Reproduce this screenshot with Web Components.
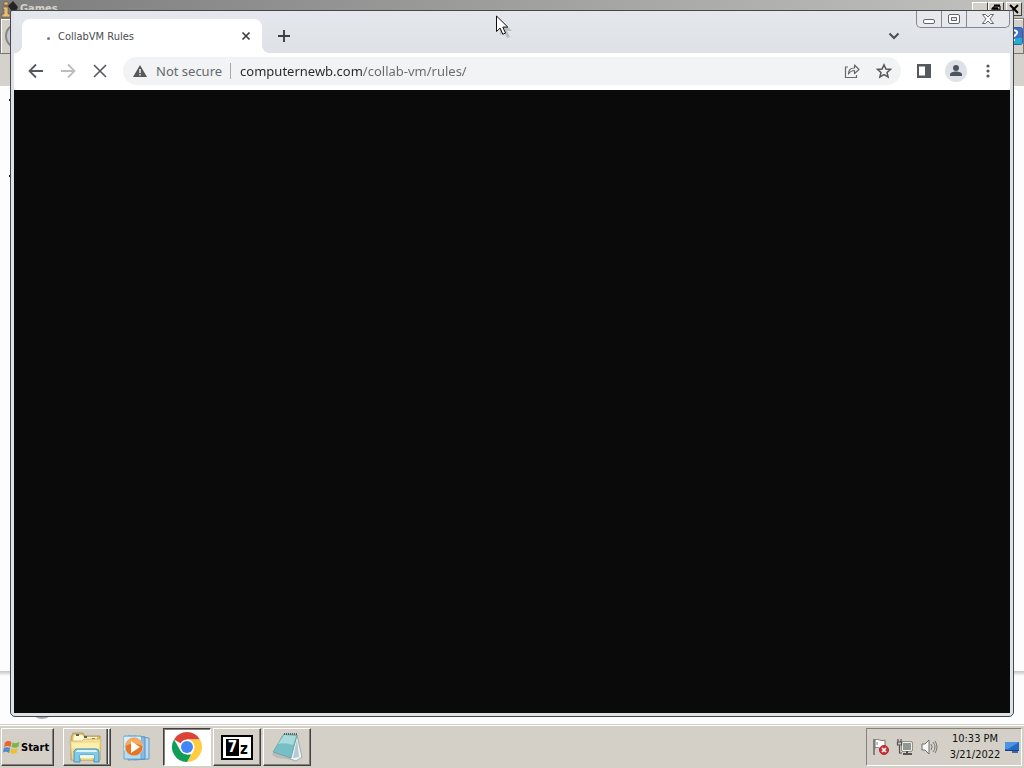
<!DOCTYPE html>
<html lang="en">
<head>
<meta charset="utf-8">
<title>Desktop</title>
<style>
  html, body {
    height: 100%;
    margin: 0;
  }
  body {
    font-family: "DejaVu Sans Condensed", "DejaVu Sans", sans-serif;
    font-size: 11px;
    background: #fdfdfe;
    overflow: hidden;
  }
</style>
</head>
<body>
<desk-top>
  <classic-window slot="window" heading="Games"></classic-window>
  <browser-window slot="window">
    <browser-tab slot="tab">CollabVM Rules</browser-tab>
    <browser-toolbar slot="toolbar" url="computernewb.com/collab-vm/rules/">Not secure</browser-toolbar>
  </browser-window>
  <task-bar slot="taskbar">
    <task-button label="Windows Explorer" mode="stack"><desk-icon name="explorer"></desk-icon></task-button>
    <task-button label="Windows Media Player" mode="flat"><desk-icon name="player"></desk-icon></task-button>
    <task-button label="Google Chrome" mode="active"><desk-icon name="chrome"></desk-icon></task-button>
    <task-button label="Archive manager"><seven-zip></seven-zip></task-button>
    <task-button label="Notepad"><desk-icon name="notepad"></desk-icon></task-button>
    <system-tray slot="tray" time="10:33 PM" date="3/21/2022"></system-tray>
  </task-bar>
</desk-top>

<script>
const icons = {
  back: [20, 20, `<path d="M17 10H4M10 3.5 3.5 10l6.500 6.500" fill="none" stroke="#55585c" stroke-width="1.800"/>`],
  forward: [20, 20, `<path d="M3 10h13M10 3.500 16.500 10 10 16.500" fill="none" stroke="#bcbdbf" stroke-width="1.800"/>`],
  stop: [20, 20, `<path d="m4 4 12 12M16 4 4 16" fill="none" stroke="#55585c" stroke-width="1.600"/>`],
  warning: [14, 14, `<path d="M7 1 14 13H0z" fill="#55585c"/><path d="M7 5v4M7 10v1.600" stroke="#f1f3f4" stroke-width="1.500"/>`],
  share: [18, 18, `<path d="M5 5H2.500v10.500h11V13" fill="none" stroke="#66696d" stroke-width="1.200"/><path d="M5.500 12c0-4 2-6 6-6V3l4.500 4.500-4.500 4v-3c-3 0-4.500 1-6 3.500z" fill="none" stroke="#66696d" stroke-width="1.200" stroke-linejoin="round"/>`],
  star: [18, 18, `<path d="m9 2.800 1.900 4.200 4.600.4-3.500 3 1.100 4.500L9 12.500l-4.100 2.400L6 10.400l-3.500-3L7.100 7z" fill="none" stroke="#55585c" stroke-width="1.500"/>`],
  panel: [16, 16, `<path d="M1 1h14v14H1z" fill="#55585c"/><path d="M3 3.500h6v9H3z" fill="#fff"/>`],
  avatar: [22, 22, `<circle cx="11" cy="11" r="11" fill="#dee1e6"/><circle cx="11" cy="8" r="3" fill="#4b5360"/><path d="M5 16v-1.500c0-2 3-3 6-3s6 1 6 3V16z" fill="#4b5360"/>`],
  dots: [16, 16, `<g fill="#55585c"><circle cx="8" cy="3" r="1.600"/><circle cx="8" cy="8" r="1.600"/><circle cx="8" cy="13" r="1.600"/></g>`],
  close: [10, 10, `<path d="m1.500 1.500 7 7m0-7-7 7" stroke="#3c4043" stroke-width="1.700"/>`],
  plus: [12, 12, `<path d="M6 0v12M0 6h12" stroke="#3c4043" stroke-width="1.900"/>`],
  chevron: [12, 8, `<path d="m1.500 1.500 4.500 4.500 4.500-4.500" fill="none" stroke="#4a4d51" stroke-width="2"/>`],
  capMin: [14, 14, `<rect x="1.500" y="7.500" width="11" height="4" rx="1.500" fill="#fff" stroke="#62656b"/>`],
  capMax: [14, 14, `<rect x="1.500" y="2.500" width="11" height="9" rx="1.500" fill="#fff" stroke="#62656b"/><path d="M4.500 5.500h5v3h-5z" fill="#e4e7eb" stroke="#62656b"/>`],
  capClose: [14, 14, `<path d="M1.500 2.500h3L7 5l2.500-2.500h3L9 7l3.500 4.500h-3L7 9l-2.500 2.500h-3L5 7z" fill="#fff" stroke="#62656b"/>`],
  oldMin: [12, 10, `<path d="M2 8h6" stroke="#000" stroke-width="2"/>`],
  oldMax: [12, 10, `<path d="M4 2h6v4H4zM2 4h6v5H2z" fill="#d4d0c8" stroke="#000"/><path d="M4 1.500h6M2 4.500h6" stroke="#000" stroke-width="2"/>`],
  oldClose: [12, 10, `<path d="m2 1 8 8m0-8-8 8" stroke="#000" stroke-width="2"/>`],
  games: [18, 18, `<path d="M3 2h4v3H3zM2 7h5v7h2v3H1v-3h2V9H2z" fill="#e8bd77" stroke="#6e532c" stroke-width=".6"/><path d="m7 6 5-5 5 6-2 4 2 2H9l1-3z" fill="#242424"/>`],
  help: [18, 18, `<rect x=".5" y=".5" width="17" height="17" rx="2" fill="#3f6fc8" stroke="#315fa9"/><path d="M1 10c7 4 11 0 16 1v6H1z" fill="#23acd4"/><path d="M6 6c0-4 7-3 6 0-.5 2-3 2-3 4M9 12v2" fill="none" stroke="#fff" stroke-width="2"/>`],
  pointer: [18, 24, `<path d="m4 4 0 16 4-3 3 6 3-1-3-6h5z" fill="#777" opacity=".35"/><path d="M.5 1v15.500l3.600-3.400 2.700 6.200 2.700-1.200-2.700-6h5z" fill="#fff" stroke="#101010"/>`],
  start: [16, 16, `<path d="M1 3.500Q4 1 7.500 3L6.500 8Q3.500 6 0 8z" fill="#e8652c"/><path d="M8.500 3.500Q12 5 15.500 3l-1.300 5Q11 9.500 7.500 8z" fill="#79b64a"/><path d="M-.2 9Q3 7.500 6.200 9L5 14Q2 12-1 13.500z" fill="#4d8bc9"/><path d="M7.200 9.300Q10.500 11 14 9.200L12.500 14Q9 15.500 6 14z" fill="#edbe36"/>`],
  explorer: [34, 34, `
    <path d="m2 8 2-5h10l2 3h15v24H2z" fill="#ddc26a" stroke="#aa914b" stroke-width=".8"/>
    <path d="M5 5h8l2 2h13v5H4z" fill="#fff7d0"/>
    <path d="M7 4h3v2H7zM15 6h3v2h-3zM23 8h3v2h-3z" fill="#52616b"/>
    <path d="M1 11h12l2-2h17l-1 21H3z" fill="#f5df93" stroke="#ceb364" stroke-width=".8"/>
    <path d="M3 13h27v5H3z" fill="#fff3bd" opacity=".7"/>
    <path d="M7 19h20q3 0 3 3v10h-5v-7H11v7H5V21z" fill="#82c8e8" stroke="#4795b8"/>
    <path d="M8 20h18q2 0 2 2H7z" fill="#dcf5fd"/><path d="M11 25h14v3H11z" fill="#eef6e6"/>`],
  player: [30, 30, `
    <path d="m12 4 15 2v21l-15 1z" fill="#b8dcf1" stroke="#6299c4"/>
    <path d="m6 4 17 1v22l-17 1z" fill="#86bce3" stroke="#5590c2"/>
    <path d="M2 4h17v23H2z" fill="#b6ddf4" stroke="#68a6d1"/>
    <path d="M2 5h17v9Q9 12 2 19z" fill="#e3f4fe" opacity=".8"/>
    <circle cx="12" cy="15" r="9" fill="#e97520" stroke="#c5c8c9"/>
    <path d="M3.500 14a8.500 8.500 0 0 1 17 0Q11 9 3.500 14z" fill="#f7a95d"/>
    <path d="m9 9 9 6-9 6z" fill="#fff"/>`],
  chrome: [32, 32, `
    <path d="M16 16 3 8.500A15 15 0 0 1 29 8.500H16z" fill="#db4437"/>
    <path d="M16 8.500h13A15 15 0 0 1 16 31l6.500-11z" fill="#ffcd40"/>
    <path d="m9.500 19.700 6.500 3.800h4.200L16 31A15 15 0 0 1 3 8.500z" fill="#0f9d58"/>
    <circle cx="16" cy="16" r="7.500" fill="#fff"/><circle cx="16" cy="16" r="6" fill="#4285f4"/>`],
  notepad: [34, 34, `
    <path d="M12 5 2 25l5 3 18 2z" fill="#87949a" opacity=".35"/>
    <path d="m27 5 5 22-6 4-6-2z" fill="#eef4f5" stroke="#919fa5" stroke-width=".8"/>
    <path d="m27 9-4 19 6-1z" fill="#b4c9d1"/>
    <path d="M14 4 3 22l18 6 6-23z" fill="#76bfc5" stroke="#669ca2" stroke-width=".7"/>
    <path d="m14 5 12 1-3 9Q15 12 8 14z" fill="#c5e9e9" opacity=".65"/>
    <path d="M14 4h13" stroke="#545f63" stroke-width="2" stroke-dasharray="1 1"/>`],
  action: [18, 18, `
    <path d="M2 1v16" stroke="#666" stroke-width="1.500"/>
    <path d="M3 2c4-2 5 2 10 0v8c-5 2-6-2-10 0z" fill="#fff" stroke="#75716f"/>
    <path d="M5 4v3" stroke="#88817d"/>
    <circle cx="12" cy="12" r="4.500" fill="#cf3238" stroke="#a72b31"/>
    <path d="m10 10 4 4m0-4-4 4" stroke="#fff" stroke-width="1.600"/>`],
  network: [18, 18, `
    <path d="M6 4h10v9H6z" fill="#8e9992" stroke="#4e514e"/><path d="M6.500 4.500h9v8h-9z" fill="none" stroke="#eee"/>
    <path d="M11 13v2M7 16h9" stroke="#555" stroke-width="2"/>
    <path d="M2 1v3M5 1v3M1.500 4h4v3h-4zM3.500 7v8H6" fill="none" stroke="#505050" stroke-width="1.200"/>`],
  volume: [18, 18, `
    <path d="M2 6h3l4-4v14l-4-4H2z" fill="#f6f6f4" stroke="#6e6e6b"/>
    <path d="M11 6q2 3 0 6M13 4q4 5 0 10M15 3q4 6 0 12" fill="none" stroke="#777773"/>`],
  monitor: [16, 14, `
    <path d="M1 2h14v8H1z" fill="#2368c5"/><path d="M1 2h14L4 9H1z" fill="#4c94e2"/>
    <path d="M1 10h14v1H1z" fill="#164386"/><path d="M8 11h6v2H8z" fill="#426a9f"/>`]
};

function build(el, html) {
  el.attachShadow({ mode: "open" }).innerHTML = html;
}

class DeskIcon extends HTMLElement {
  connectedCallback() {
    if (this.shadowRoot) return;
    const [w, h, art] = icons[this.getAttribute("name")];
    build(this, `
      <style>
        :host { display: inline-flex; flex: none; }
        svg { display: block; overflow: visible; }
      </style>
      <svg width="${w}" height="${h}" viewBox="0 0 ${w} ${h}" aria-hidden="true">${art}</svg>
    `);
  }
}

class DeskTop extends HTMLElement {
  constructor() {
    super();
    build(this, `
      <style>
        :host { display: flex; flex-direction: column; height: 100vh; }
        main { position: relative; flex: 1; min-height: 0; }
        .cursor { position: absolute; left: 496px; top: 15px; z-index: 3; pointer-events: none; }
      </style>
      <main>
        <slot name="window"></slot>
        <desk-icon class="cursor" name="pointer"></desk-icon>
      </main>
      <slot name="taskbar"></slot>
    `);
  }
}

// the window that lies behind the browser, only its edges show
class ClassicWindow extends HTMLElement {
  connectedCallback() {
    if (this.shadowRoot) return;
    build(this, `
      <style>
        :host {
          position: absolute;
          inset: 0;
          display: flex;
          flex-direction: column;
          background: #fdfdfe;
        }
        header {
          display: flex;
          align-items: center;
          height: 18px;
          padding: 0 2px 0 1px;
          background: linear-gradient(90deg, #7d7d7d, #c1c1c0);
          color: #d4d0c8;
          font-weight: bold;
        }
        h2 { flex: 1; margin: 0 0 0 1px; font-size: 11px; line-height: 20px; }
        header button {
          display: flex;
          align-items: center;
          justify-content: center;
          width: 16px;
          height: 14px;
          padding: 0;
          border: 1px solid;
          border-color: #fff #404040 #404040 #fff;
          background: #d4d0c8;
        }
        header button:last-child { margin-left: 2px; }
        .bar {
          display: flex;
          align-items: center;
          justify-content: space-between;
          box-sizing: border-box;
          height: 36px;
          border: 1px solid #777;
          background: #d4d0c8;
          box-shadow: inset 1px 1px #fff;
        }
        .nav {
          width: 26px;
          height: 26px;
          margin-left: 4px;
          padding: 0;
          border: 2px solid #85878a;
          border-radius: 50%;
          background: #c5c6c7;
        }
        .menu { height: 32px; background: #d5d2cc; }
        .view { flex: 1; }
        .details {
          height: 53px;
          background: linear-gradient(#c4c3c2, #fdfdfe 5px);
        }
        .marks {
          position: absolute;
          left: 9px;
          top: 99px;
          width: 2px;
          height: 78px;
          box-sizing: border-box;
          border: solid #222;
          border-width: 2px 0;
        }
        .thumb {
          position: absolute;
          left: 33px;
          bottom: 5px;
          width: 18px;
          height: 12px;
          border-radius: 50%;
          background: #aaa;
        }
      </style>
      <header>
        <desk-icon name="games"></desk-icon>
        <h2>${this.getAttribute("heading")}</h2>
        <button aria-label="Minimize"><desk-icon name="oldMin"></desk-icon></button>
        <button aria-label="Restore"><desk-icon name="oldMax"></desk-icon></button>
        <button aria-label="Close"><desk-icon name="oldClose"></desk-icon></button>
      </header>
      <div class="bar">
        <button class="nav" aria-label="Back"></button>
        <desk-icon name="help"></desk-icon>
      </div>
      <div class="menu"></div>
      <div class="view"></div>
      <div class="details"></div>
      <div class="marks"></div>
      <div class="thumb"></div>
    `);
  }
}

class BrowserWindow extends HTMLElement {
  constructor() {
    super();
    build(this, `
      <style>
        :host {
          position: absolute;
          inset: 10px 10px 7px;
          z-index: 1;
          display: flex;
          flex-direction: column;
          box-sizing: border-box;
          padding: 0 3px 3px;
          border: 1px solid #45474b;
          border-radius: 2px 2px 5px 5px;
          background: #dee1e6;
        }
        .strip {
          display: flex;
          align-items: flex-end;
          height: 42px;
          padding-left: 8px;
          background: linear-gradient(#e4e7ec, #dee1e6);
        }
        .strip > button {
          display: grid;
          place-items: center;
          width: 28px;
          height: 34px;
          padding: 0;
          border: 0;
          background: none;
        }
        .new { margin-left: 8px; }
        .search { margin-left: auto; margin-right: 8px; }
        .caption {
          display: flex;
          align-self: flex-start;
          box-sizing: border-box;
          height: 17px;
          border: 1px solid #85888e;
          border-top: 0;
          border-radius: 0 0 5px 5px;
          background: #e6e8ec;
        }
        .caption button {
          display: grid;
          place-items: center;
          width: 25px;
          padding: 0;
          border: 0;
          border-right: 1px solid #85888e;
          background: none;
        }
        .caption button:last-child { width: 42px; border: 0; }
        .page { flex: 1; background: #0a0a0a; }
      </style>
      <div class="strip">
        <slot name="tab"></slot>
        <button class="new" aria-label="New tab"><desk-icon name="plus"></desk-icon></button>
        <button class="search" aria-label="Search tabs"><desk-icon name="chevron"></desk-icon></button>
        <div class="caption">
          <button aria-label="Minimize"><desk-icon name="capMin"></desk-icon></button>
          <button aria-label="Maximize"><desk-icon name="capMax"></desk-icon></button>
          <button aria-label="Close"><desk-icon name="capClose"></desk-icon></button>
        </div>
      </div>
      <slot name="toolbar"></slot>
      <div class="page"><slot></slot></div>
    `);
  }
}

class BrowserTab extends HTMLElement {
  constructor() {
    super();
    build(this, `
      <style>
        :host {
          position: relative;
          display: flex;
          align-items: center;
          box-sizing: border-box;
          width: 240px;
          height: 34px;
          padding: 0 9px 0 25px;
          border-radius: 8px 8px 0 0;
          background: #fff;
          color: #4a4d51;
        }
        /* curved feet of the tab */
        :host::before, :host::after {
          content: "";
          position: absolute;
          bottom: 0;
          width: 8px;
          height: 8px;
        }
        :host::before { right: 100%; background: radial-gradient(circle at 0 0, transparent 8px, #fff 8px); }
        :host::after { left: 100%; background: radial-gradient(circle at 100% 0, transparent 8px, #fff 8px); }
        i { width: 3px; height: 3px; margin: 4px 8px 0 0; border-radius: 50%; background: #777a80; }
        span { flex: 1; }
        button { display: grid; place-items: center; width: 14px; height: 14px; padding: 0; border: 0; background: none; }
      </style>
      <i></i>
      <span><slot></slot></span>
      <button aria-label="Close tab"><desk-icon name="close"></desk-icon></button>
    `);
  }
}

class BrowserToolbar extends HTMLElement {
  connectedCallback() {
    if (this.shadowRoot) return;
    build(this, `
      <style>
        :host {
          display: flex;
          align-items: center;
          gap: 4px;
          box-sizing: border-box;
          height: 37px;
          padding: 0 8px 2px;
          background: #fff;
          font: 13px "Noto Sans", sans-serif;
        }
        button { display: grid; place-items: center; width: 28px; height: 28px; padding: 0; border: 0; background: none; }
        .omnibox {
          flex: 1;
          display: flex;
          align-items: center;
          gap: 4px;
          box-sizing: border-box;
          height: 28px;
          margin: 0 5px;
          padding: 0 3px 0 10px;
          border-radius: 14px;
          background: #f1f3f4;
          color: #66696d;
        }
        label { margin-left: 5px; white-space: nowrap; }
        input {
          flex: 1;
          min-width: 0;
          height: 24px;
          padding: 0 0 0 5px;
          border: 0;
          outline: 0;
          font: inherit;
          /* host name dark, path lighter */
          background: linear-gradient(90deg, #25282c 127px, #66696d 127px);
          -webkit-background-clip: text;
          background-clip: text;
          -webkit-text-fill-color: transparent;
        }
        .rule { width: 1px; height: 16px; margin-left: 4px; background: #a5a8ac; }
      </style>
      <button aria-label="Back"><desk-icon name="back"></desk-icon></button>
      <button aria-label="Forward"><desk-icon name="forward"></desk-icon></button>
      <button aria-label="Stop"><desk-icon name="stop"></desk-icon></button>
      <div class="omnibox">
        <desk-icon name="warning"></desk-icon>
        <label for="url"><slot></slot></label>
        <span class="rule"></span>
        <input id="url" type="text" spellcheck="false" value="${this.getAttribute("url")}">
        <button aria-label="Share"><desk-icon name="share"></desk-icon></button>
        <button aria-label="Bookmark"><desk-icon name="star"></desk-icon></button>
      </div>
      <button aria-label="Side panel"><desk-icon name="panel"></desk-icon></button>
      <button aria-label="Profile"><desk-icon name="avatar"></desk-icon></button>
      <button aria-label="Menu"><desk-icon name="dots"></desk-icon></button>
    `);
  }
}

class TaskBar extends HTMLElement {
  constructor() {
    super();
    build(this, `
      <style>
        :host {
          display: flex;
          box-sizing: border-box;
          height: 44px;
          padding: 2px 2px 2px 1px;
          border-top: 1px solid #d4d0c8;
          background: #d4d0c8;
          box-shadow: inset 0 1px #fff;
        }
        .start {
          display: flex;
          align-items: center;
          gap: 1px;
          box-sizing: border-box;
          width: 53px;
          height: 38px;
          margin-top: 1px;
          padding: 0 2px;
          border: 1px solid;
          border-color: #fff #404040 #404040 #fff;
          box-shadow: inset -1px -1px #85827c;
          background: #d4d0c8;
          color: #000;
          font: bold 11px "DejaVu Sans Condensed", "DejaVu Sans", sans-serif;
        }
        nav { flex: 1; display: flex; gap: 2px; margin: 1px 0 0 9px; }
      </style>
      <button class="start"><desk-icon name="start"></desk-icon>Start</button>
      <nav><slot></slot></nav>
      <slot name="tray"></slot>
    `);
  }
}

class TaskButton extends HTMLElement {
  connectedCallback() {
    if (this.shadowRoot) return;
    build(this, `
      <style>
        :host { display: block; width: 48px; height: 38px; }
        button {
          display: grid;
          place-items: center;
          box-sizing: border-box;
          width: 100%;
          height: 100%;
          padding: 0;
          border: 1px solid;
          border-color: #fff #404040 #404040 #fff;
          box-shadow: inset -1px -1px #85827c;
          background: #d4d0c8;
        }
        :host([mode="flat"]) button { border-color: transparent; box-shadow: none; }
        :host([mode="active"]) button {
          border-color: #404040 #fff #fff #404040;
          box-shadow: inset 1px 1px #85827c;
          background: #fff;
        }
        :host([mode="stack"]) button {
          padding-right: 3px;
          box-shadow: inset -1px -1px #85827c, inset -2px 0 #eee, inset -3px 0 #404040, inset -4px 0 #85827c;
        }
      </style>
      <button aria-label="${this.getAttribute("label")}"><slot></slot></button>
    `);
  }
}

class SevenZip extends HTMLElement {
  constructor() {
    super();
    build(this, `
      <style>
        :host {
          display: flex;
          align-items: center;
          justify-content: center;
          gap: 1px;
          box-sizing: border-box;
          width: 32px;
          height: 25px;
          border: 2px solid #000;
          background: #fff;
          color: #000;
          font: bold 15px/17px "DejaVu Sans Condensed", "DejaVu Sans", sans-serif;
        }
        b { width: 13px; background: #000; color: #fff; text-align: center; }
        span { padding-top: 4px; }
      </style>
      <b>7</b><span>z</span>
    `);
  }
}

class SystemTray extends HTMLElement {
  connectedCallback() {
    if (this.shadowRoot) return;
    build(this, `
      <style>
        :host {
          display: flex;
          align-items: center;
          box-sizing: border-box;
          height: 38px;
          margin-top: 1px;
          padding: 0 1px 0 5px;
          border: 1px solid;
          border-color: #85827c #fff #fff #85827c;
          color: #111;
          font-size: 11px;
        }
        .icons { display: flex; gap: 6px; }
        time { width: 56px; margin-left: 9px; margin-right: 1px; line-height: 16px; text-align: center; white-space: nowrap; }
      </style>
      <div class="icons">
        <desk-icon name="action"></desk-icon>
        <desk-icon name="network"></desk-icon>
        <desk-icon name="volume"></desk-icon>
      </div>
      <time>${this.getAttribute("time")}<br>${this.getAttribute("date")}</time>
      <desk-icon name="monitor"></desk-icon>
    `);
  }
}

customElements.define("desk-icon", DeskIcon);
customElements.define("desk-top", DeskTop);
customElements.define("classic-window", ClassicWindow);
customElements.define("browser-window", BrowserWindow);
customElements.define("browser-tab", BrowserTab);
customElements.define("browser-toolbar", BrowserToolbar);
customElements.define("task-bar", TaskBar);
customElements.define("task-button", TaskButton);
customElements.define("seven-zip", SevenZip);
customElements.define("system-tray", SystemTray);
</script>
</body>
</html>
